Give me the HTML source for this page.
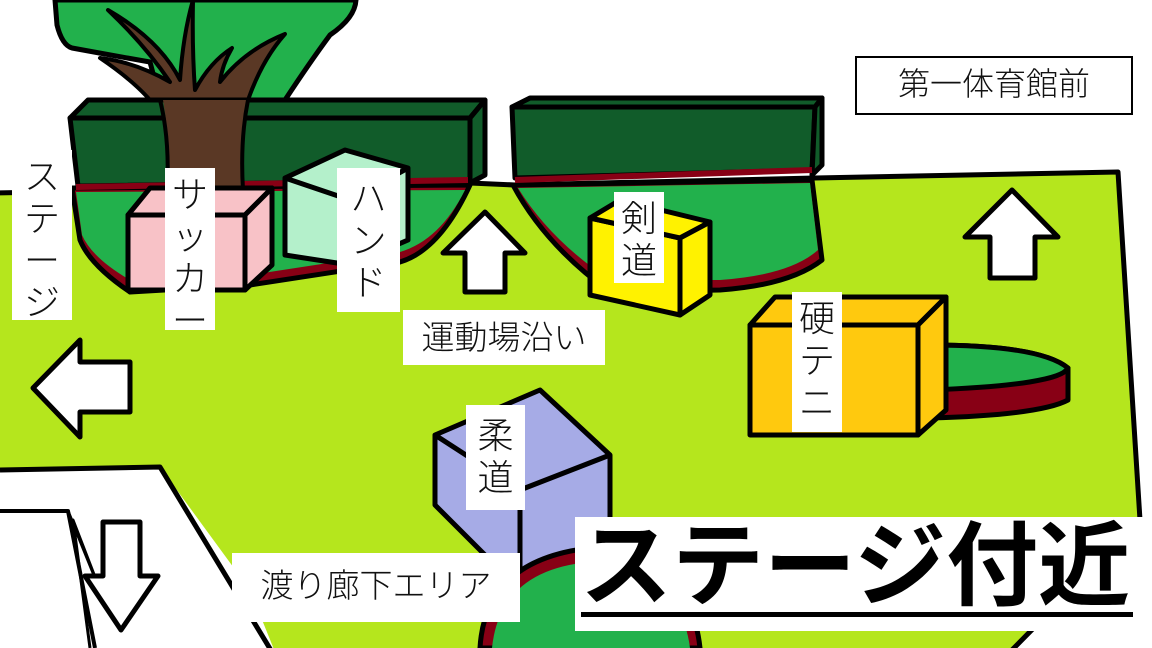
<!DOCTYPE html>
<html><head><meta charset="utf-8"><style>
html,body{margin:0;padding:0;background:#fff;width:1152px;height:648px;overflow:hidden}
svg{position:absolute;left:0;top:0}
.lb{position:absolute;background:#fff;font-family:"Liberation Sans","Noto Sans CJK JP",sans-serif;color:#111;font-weight:300}
.v{font-size:36px;line-height:42px;text-align:center;padding-top:6px;box-sizing:border-box}
</style></head><body>
<svg width="1152" height="648" viewBox="0 0 1152 648" stroke="#000" stroke-width="5" stroke-linejoin="round">
<polygon fill="#b5e61d" points="-5,193 430,185 470,183 515,185 815,178 1118,172 1140,520 1010,652 -5,652"/>
<polygon fill="#fff" points="-5,470 160,467 250,590 275,652 -5,652" stroke="none"/>
<polyline fill="none" points="0,470 160,467 272,652"/>
<polyline fill="none" points="0,511 68,511 95,648" stroke-width="4"/>
<polyline fill="none" points="68,511 100,590 73,520 90,648" stroke-width="3"/>
<polygon fill="#fff" points="103,522 140,522 140,576 158,576 121,630 85,576 103,576"/>
<path fill="#22b14c" d="M55,0 L57,25 Q62,45 72,48 Q110,55 150,62 L160,100 L285,100 Q310,62 330,35 Q355,18 356,0 Z"/>
<path fill="#5a3825" d="M165,190 Q170,140 158,110 Q140,85 100,58 Q135,62 170,82 Q145,45 108,10 Q160,40 180,80 Q183,35 193,0 Q192,50 195,90 Q210,62 232,48 Q222,65 220,82 Q245,50 285,34 Q262,60 248,100 Q238,140 245,195 Z" stroke-width="4"/>
<path fill="#880015" d="M72,188 L80,240 Q90,265 130,292 L250,285 L400,262 Q440,250 470,185 Z"/>
<path fill="#22b14c" d="M76,192 L82,235 Q92,258 130,280 L250,275 L400,252 Q440,240 465,190 Z" stroke="none"/>
<polygon fill="#115c2a" points="70,118 470,118 470,180 78,186"/>
<polygon fill="#115c2a" points="70,118 88,100 485,100 470,118"/>
<polygon fill="#115c2a" points="470,118 485,100 485,175 470,183"/>
<path d="M76,187 L468,180" stroke="#880015" stroke-width="6"/>
<path fill="#5a3825" d="M163,100 L248,100 Q240,140 245,190 L170,190 Q170,140 163,100 Z" stroke="none"/>
<path fill="none" d="M160,100 Q170,140 167,190 M248,100 Q240,140 243,190" stroke-width="4"/>
<polygon fill="#f8c2c7" points="128,215 245,215 245,290 128,290"/>
<polygon fill="#f8c2c7" points="128,215 150,188 272,188 245,215"/>
<polygon fill="#f8c2c7" points="245,215 272,188 272,265 245,290"/>
<polygon fill="#b4f0cb" points="285,178 345,150 408,168 408,240 350,265 285,255"/>
<polyline fill="none" points="285,178 350,200 408,168"/>
<polygon fill="#fff" points="485,212 525,253 505,253 505,292 465,292 465,253 443,253"/>
<path fill="#880015" d="M513,185 Q545,245 610,292 L720,290 Q790,285 822,260 L812,180 Z"/>
<path fill="#22b14c" d="M518,188 Q550,240 610,280 L720,280 Q790,275 818,250 L810,183 Z" stroke="none"/>
<polygon fill="#115c2a" points="512,107 815,107 812,170 515,178"/>
<polygon fill="#115c2a" points="512,107 530,98 822,98 815,107"/>
<polygon fill="#115c2a" points="815,107 822,98 822,165 812,175"/>
<path d="M515,180 L812,170" stroke="#880015" stroke-width="6"/>
<polygon fill="#fff200" points="590,218 680,238 680,315 590,295"/>
<polygon fill="#fff200" points="590,218 620,200 710,222 680,238"/>
<polygon fill="#fff200" points="680,238 710,222 710,295 680,315"/>
<polygon fill="#fff" points="1012,190 1058,237 1035,237 1035,278 990,278 990,237 965,237"/>
<path fill="#880015" d="M930,345 Q1040,345 1068,368 L1068,400 Q1040,415 930,418 Z"/>
<path fill="#22b14c" d="M930,345 Q1040,345 1068,368 Q1060,385 930,390 Z"/>
<polygon fill="#ffc90e" points="750,325 918,325 918,435 750,435"/>
<polygon fill="#ffc90e" points="750,325 775,297 946,297 918,325"/>
<polygon fill="#ffc90e" points="918,325 946,297 946,410 918,435"/>
<polygon fill="#fff" points="33,388 80,340 80,362 130,362 130,412 80,412 80,437"/>
<polygon fill="#a6abe6" points="435,435 540,390 610,455 610,545 520,590 435,505"/>
<polyline fill="none" points="435,435 520,490 610,455"/>
<line x1="520" y1="490" x2="520" y2="590"/>
<path fill="#880015" d="M480,648 Q485,560 590,548 Q690,555 700,648 Z"/>
<path fill="#22b14c" d="M492,648 Q500,570 590,562 Q680,570 690,648 Z" stroke="none"/>
</svg>
<div class="lb v" style="left:12px;top:150px;width:60px;height:170px">ス<br>テ<br>ー<br>ジ</div>
<div class="lb v" style="left:165px;top:168px;width:50px;height:162px">サ<br>ッ<br>カ<br>ー</div>
<div class="lb v" style="left:337px;top:168px;width:63px;height:144px;padding-top:10px">ハ<br>ン<br>ド</div>
<div class="lb v" style="left:614px;top:192px;width:50px;height:91px">剣<br>道</div>
<div class="lb v" style="left:792px;top:292px;width:50px;height:140px">硬<br>テ<br>ニ</div>
<div class="lb v" style="left:466px;top:405px;width:59px;height:105px;padding-top:10px">柔<br>道</div>
<div class="lb" style="left:403px;top:310px;width:202px;height:55px;font-size:33px;line-height:55px;text-align:center">運動場沿い</div>
<div class="lb" style="left:232px;top:553px;width:288px;height:69px;font-size:33px;line-height:66px;text-align:center">渡り廊下エリア</div>
<div class="lb" style="left:855px;top:56px;width:278px;height:59px;box-sizing:border-box;border:2px solid #000;font-size:32px;line-height:52px;text-align:center">第一体育館前</div>
<div class="lb" style="left:575px;top:517px;width:577px;height:114px;font-weight:bold;font-size:92px;line-height:100px;padding-left:5px;box-sizing:border-box;color:#000;white-space:nowrap;overflow:hidden">ステージ付近<div style="position:absolute;left:6px;top:95px;width:552px;height:5px;background:#000"></div></div>
</body></html>
